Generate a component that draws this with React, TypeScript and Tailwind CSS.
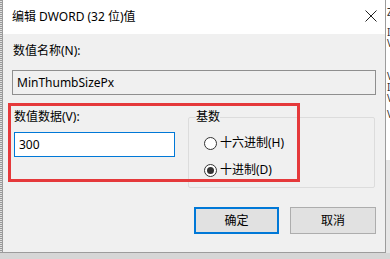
import React from 'react'

const font = { fontFamily: '"Noto Sans", "Noto Sans CJK SC", sans-serif' }

const Radio = ({ checked, label }: { checked?: boolean; label: string }) => (
  <div className="flex items-center h-[16px]">
    <span className="w-[13px] h-[13px] rounded-full border border-[#333] bg-white flex items-center justify-center">
      {checked && <span className="w-[7px] h-[7px] rounded-full bg-[#333]" />}
    </span>
    <span className="ml-[3px] text-[12px] leading-[16px] text-black">{label}</span>
  </div>
)

export default function App() {
  return (
    <div className="relative w-[390px] h-[259px] overflow-hidden bg-[#d6d6d6]" style={font}>
      <div className="flex h-[253px]">
        {/* left edge of desktop */}
        <div className="w-[2px] bg-[repeating-linear-gradient(180deg,#9a9a9a_0px,#9a9a9a_1px,#e0e0e0_1px,#e0e0e0_2px)]" />

        {/* dialog */}
        <div className="w-[384px] flex flex-col border-l border-r border-b border-[#9c9c9c] bg-[#f0f0f0]">
          {/* title bar */}
          <div className="h-[34px] bg-white flex items-center justify-between pl-[9px] pr-[8px] shrink-0">
            <span className="text-[12px] leading-[16px] text-black">编辑 DWORD (32 位)值</span>
            <svg width="12" height="12" viewBox="0 0 12 12" className="mt-[-2px]">
              <path d="M0.5 0.5 L11.5 11.5 M11.5 0.5 L0.5 11.5" stroke="#222" strokeWidth="1" />
            </svg>
          </div>

          {/* body */}
          <div className="flex-1 flex flex-col pl-[9px] pr-[9px] text-[12px] leading-[16px] text-black">
            <div className="mt-[9px] ml-[1px] h-[16px]">数值名称(N):</div>
            <div className="mt-[11px] h-[25px] border border-[#8f8f8f] bg-[#f0f0f0] flex items-center pl-[4px]">
              MinThumbSizePx
            </div>

            <div className="flex mt-[14px]">
              <div className="flex flex-col ml-[2px]">
                <div className="h-[16px]">数值数据(V):</div>
                <div className="mt-[7px] w-[161px] h-[25px] border border-[#0078d7] bg-white flex items-center pl-[4px]">
                  300
                </div>
              </div>

              <fieldset className="ml-[13px] w-[187px] h-[79px] border border-[#dcdcdc] rounded-[2px] pl-[15px]">
                <legend className="ml-[-8px] px-[0px] h-[16px] leading-[16px]">基数</legend>
                <div className="mt-[10px] flex flex-col gap-[11px]">
                  <Radio label="十六进制(H)" />
                  <Radio checked label="十进制(D)" />
                </div>
              </fieldset>
            </div>

            <div className="mt-[19px] flex justify-end gap-[11px]">
              <button className="w-[85px] h-[27px] bg-[#e1e1e1] border-2 border-[#0078d7] text-[12px] text-black">
                确定
              </button>
              <button className="w-[86px] h-[27px] bg-[#e1e1e1] border border-[#adadad] text-[12px] text-black">
                取消
              </button>
            </div>
          </div>
        </div>

        {/* window behind, right side */}
        <div className="flex-1 flex flex-col overflow-hidden">
          <div className="h-[160px] bg-white pt-[7px] pl-[1px] text-[10px] leading-[11px] text-[#333] whitespace-nowrap">
            <div>Z</div>
            <div className="mt-[9px]">I</div>
            <div>V</div>
            <div className="mt-[22px]">V</div>
            <div>I</div>
            <div>V</div>
            <div className="mt-[5px]">V</div>
          </div>
          <div className="flex-1 bg-[#e6e6e6]" />
        </div>
      </div>

      {/* red highlight annotation */}
      <div className="absolute left-[8px] top-[103px] w-[292px] h-[79px] border-[3px] border-[#e5393b] pointer-events-none" />
    </div>
  )
}
